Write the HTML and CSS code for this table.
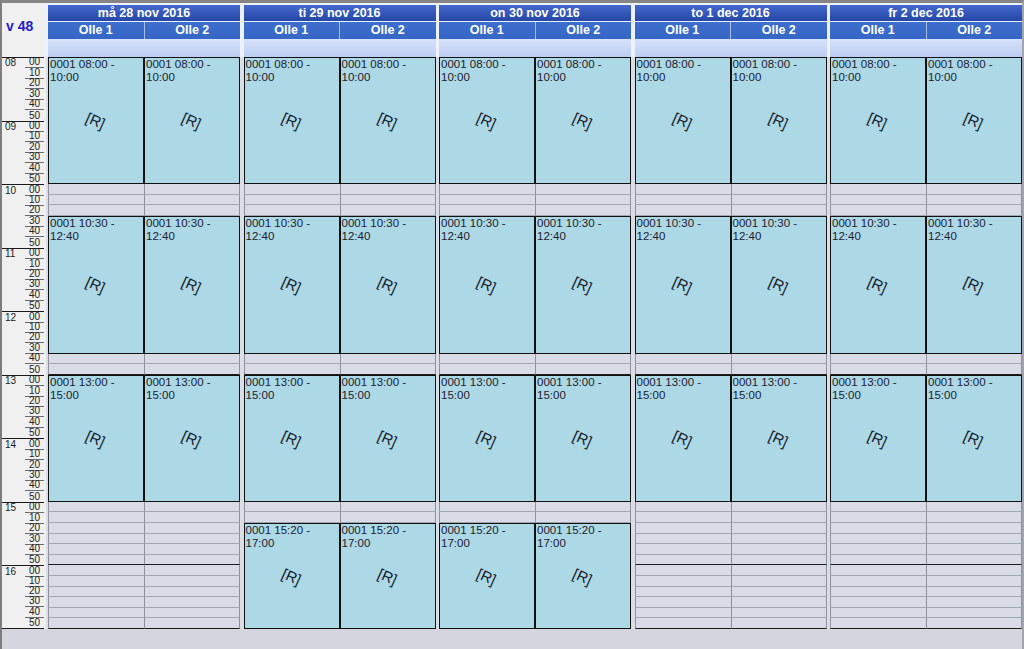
FILE: index.html
```html
<!DOCTYPE html>
<html lang="sv">
<head>
<meta charset="utf-8">
<title>Schema v 48</title>
<link rel="stylesheet" href="styles.css">
</head>
<body>
<div class="frame">
  <div class="timecol">
    <div class="week">v 48</div>
    <div class="tbody">
      <div class="hour"><div class="tr"><span class="h">08</span><span class="m">00</span></div><div class="tr"><span class="m">10</span></div><div class="tr"><span class="m">20</span></div><div class="tr"><span class="m">30</span></div><div class="tr"><span class="m">40</span></div><div class="tr"><span class="m">50</span></div></div>
      <div class="hour"><div class="tr"><span class="h">09</span><span class="m">00</span></div><div class="tr"><span class="m">10</span></div><div class="tr"><span class="m">20</span></div><div class="tr"><span class="m">30</span></div><div class="tr"><span class="m">40</span></div><div class="tr"><span class="m">50</span></div></div>
      <div class="hour"><div class="tr"><span class="h">10</span><span class="m">00</span></div><div class="tr"><span class="m">10</span></div><div class="tr"><span class="m">20</span></div><div class="tr"><span class="m">30</span></div><div class="tr"><span class="m">40</span></div><div class="tr"><span class="m">50</span></div></div>
      <div class="hour"><div class="tr"><span class="h">11</span><span class="m">00</span></div><div class="tr"><span class="m">10</span></div><div class="tr"><span class="m">20</span></div><div class="tr"><span class="m">30</span></div><div class="tr"><span class="m">40</span></div><div class="tr"><span class="m">50</span></div></div>
      <div class="hour"><div class="tr"><span class="h">12</span><span class="m">00</span></div><div class="tr"><span class="m">10</span></div><div class="tr"><span class="m">20</span></div><div class="tr"><span class="m">30</span></div><div class="tr"><span class="m">40</span></div><div class="tr"><span class="m">50</span></div></div>
      <div class="hour"><div class="tr"><span class="h">13</span><span class="m">00</span></div><div class="tr"><span class="m">10</span></div><div class="tr"><span class="m">20</span></div><div class="tr"><span class="m">30</span></div><div class="tr"><span class="m">40</span></div><div class="tr"><span class="m">50</span></div></div>
      <div class="hour"><div class="tr"><span class="h">14</span><span class="m">00</span></div><div class="tr"><span class="m">10</span></div><div class="tr"><span class="m">20</span></div><div class="tr"><span class="m">30</span></div><div class="tr"><span class="m">40</span></div><div class="tr"><span class="m">50</span></div></div>
      <div class="hour"><div class="tr"><span class="h">15</span><span class="m">00</span></div><div class="tr"><span class="m">10</span></div><div class="tr"><span class="m">20</span></div><div class="tr"><span class="m">30</span></div><div class="tr"><span class="m">40</span></div><div class="tr"><span class="m">50</span></div></div>
      <div class="hour"><div class="tr"><span class="h">16</span><span class="m">00</span></div><div class="tr"><span class="m">10</span></div><div class="tr"><span class="m">20</span></div><div class="tr"><span class="m">30</span></div><div class="tr"><span class="m">40</span></div><div class="tr"><span class="m">50</span></div></div>
    </div>
  </div>

  <!-- Day 1 -->
  <div class="day">
    <div class="dh">må 28 nov 2016</div>
    <div class="ol"><span>Olle 1</span><span>Olle 2</span></div>
    <div class="lt"></div>
    <div class="dbody">
      <div class="res">
        <div class="ev e1"><span class="t">0001 08:00 -<br>10:00</span><span class="r">[R]</span></div>
        <div class="ev e2"><span class="t">0001 10:30 -<br>12:40</span><span class="r">[R]</span></div>
        <div class="ev e3"><span class="t">0001 13:00 -<br>15:00</span><span class="r">[R]</span></div>
        <i class="c"></i><i class="c"></i><i class="c"></i><i class="c"></i><i class="c hr"></i>
        <i class="c"></i><i class="c"></i><i class="c"></i><i class="c"></i><i class="c"></i><i class="c hr"></i>
        <i class="c"></i><i class="c"></i><i class="c"></i><i class="c"></i><i class="c"></i><i class="c hr"></i>
      </div>
      <div class="res">
        <div class="ev e1"><span class="t">0001 08:00 -<br>10:00</span><span class="r">[R]</span></div>
        <div class="ev e2"><span class="t">0001 10:30 -<br>12:40</span><span class="r">[R]</span></div>
        <div class="ev e3"><span class="t">0001 13:00 -<br>15:00</span><span class="r">[R]</span></div>
        <i class="c"></i><i class="c"></i><i class="c"></i><i class="c"></i><i class="c hr"></i>
        <i class="c"></i><i class="c"></i><i class="c"></i><i class="c"></i><i class="c"></i><i class="c hr"></i>
        <i class="c"></i><i class="c"></i><i class="c"></i><i class="c"></i><i class="c"></i><i class="c hr"></i>
      </div>
    </div>
  </div>

  <!-- Day 2 -->
  <div class="day">
    <div class="dh">ti 29 nov 2016</div>
    <div class="ol"><span>Olle 1</span><span>Olle 2</span></div>
    <div class="lt"></div>
    <div class="dbody">
      <div class="res">
        <div class="ev e1"><span class="t">0001 08:00 -<br>10:00</span><span class="r">[R]</span></div>
        <div class="ev e2"><span class="t">0001 10:30 -<br>12:40</span><span class="r">[R]</span></div>
        <div class="ev e3"><span class="t">0001 13:00 -<br>15:00</span><span class="r">[R]</span></div>
        <div class="ev e4"><span class="t">0001 15:20 -<br>17:00</span><span class="r">[R]</span></div>
        <i class="c"></i><i class="c"></i><i class="c"></i><i class="c"></i><i class="c hr"></i>
        <i class="c"></i><i class="c"></i>
      </div>
      <div class="res">
        <div class="ev e1"><span class="t">0001 08:00 -<br>10:00</span><span class="r">[R]</span></div>
        <div class="ev e2"><span class="t">0001 10:30 -<br>12:40</span><span class="r">[R]</span></div>
        <div class="ev e3"><span class="t">0001 13:00 -<br>15:00</span><span class="r">[R]</span></div>
        <div class="ev e4"><span class="t">0001 15:20 -<br>17:00</span><span class="r">[R]</span></div>
        <i class="c"></i><i class="c"></i><i class="c"></i><i class="c"></i><i class="c hr"></i>
        <i class="c"></i><i class="c"></i>
      </div>
    </div>
  </div>

  <!-- Day 3 -->
  <div class="day">
    <div class="dh">on 30 nov 2016</div>
    <div class="ol"><span>Olle 1</span><span>Olle 2</span></div>
    <div class="lt"></div>
    <div class="dbody">
      <div class="res">
        <div class="ev e1"><span class="t">0001 08:00 -<br>10:00</span><span class="r">[R]</span></div>
        <div class="ev e2"><span class="t">0001 10:30 -<br>12:40</span><span class="r">[R]</span></div>
        <div class="ev e3"><span class="t">0001 13:00 -<br>15:00</span><span class="r">[R]</span></div>
        <div class="ev e4"><span class="t">0001 15:20 -<br>17:00</span><span class="r">[R]</span></div>
        <i class="c"></i><i class="c"></i><i class="c"></i><i class="c"></i><i class="c hr"></i>
        <i class="c"></i><i class="c"></i>
      </div>
      <div class="res">
        <div class="ev e1"><span class="t">0001 08:00 -<br>10:00</span><span class="r">[R]</span></div>
        <div class="ev e2"><span class="t">0001 10:30 -<br>12:40</span><span class="r">[R]</span></div>
        <div class="ev e3"><span class="t">0001 13:00 -<br>15:00</span><span class="r">[R]</span></div>
        <div class="ev e4"><span class="t">0001 15:20 -<br>17:00</span><span class="r">[R]</span></div>
        <i class="c"></i><i class="c"></i><i class="c"></i><i class="c"></i><i class="c hr"></i>
        <i class="c"></i><i class="c"></i>
      </div>
    </div>
  </div>

  <!-- Day 4 -->
  <div class="day">
    <div class="dh">to 1 dec 2016</div>
    <div class="ol"><span>Olle 1</span><span>Olle 2</span></div>
    <div class="lt"></div>
    <div class="dbody">
      <div class="res">
        <div class="ev e1"><span class="t">0001 08:00 -<br>10:00</span><span class="r">[R]</span></div>
        <div class="ev e2"><span class="t">0001 10:30 -<br>12:40</span><span class="r">[R]</span></div>
        <div class="ev e3"><span class="t">0001 13:00 -<br>15:00</span><span class="r">[R]</span></div>
        <i class="c"></i><i class="c"></i><i class="c"></i><i class="c"></i><i class="c hr"></i>
        <i class="c"></i><i class="c"></i><i class="c"></i><i class="c"></i><i class="c"></i><i class="c hr"></i>
        <i class="c"></i><i class="c"></i><i class="c"></i><i class="c"></i><i class="c"></i><i class="c hr"></i>
      </div>
      <div class="res">
        <div class="ev e1"><span class="t">0001 08:00 -<br>10:00</span><span class="r">[R]</span></div>
        <div class="ev e2"><span class="t">0001 10:30 -<br>12:40</span><span class="r">[R]</span></div>
        <div class="ev e3"><span class="t">0001 13:00 -<br>15:00</span><span class="r">[R]</span></div>
        <i class="c"></i><i class="c"></i><i class="c"></i><i class="c"></i><i class="c hr"></i>
        <i class="c"></i><i class="c"></i><i class="c"></i><i class="c"></i><i class="c"></i><i class="c hr"></i>
        <i class="c"></i><i class="c"></i><i class="c"></i><i class="c"></i><i class="c"></i><i class="c hr"></i>
      </div>
    </div>
  </div>

  <!-- Day 5 -->
  <div class="day">
    <div class="dh">fr 2 dec 2016</div>
    <div class="ol"><span>Olle 1</span><span>Olle 2</span></div>
    <div class="lt"></div>
    <div class="dbody">
      <div class="res">
        <div class="ev e1"><span class="t">0001 08:00 -<br>10:00</span><span class="r">[R]</span></div>
        <div class="ev e2"><span class="t">0001 10:30 -<br>12:40</span><span class="r">[R]</span></div>
        <div class="ev e3"><span class="t">0001 13:00 -<br>15:00</span><span class="r">[R]</span></div>
        <i class="c"></i><i class="c"></i><i class="c"></i><i class="c"></i><i class="c hr"></i>
        <i class="c"></i><i class="c"></i><i class="c"></i><i class="c"></i><i class="c"></i><i class="c hr"></i>
        <i class="c"></i><i class="c"></i><i class="c"></i><i class="c"></i><i class="c"></i><i class="c hr"></i>
      </div>
      <div class="res">
        <div class="ev e1"><span class="t">0001 08:00 -<br>10:00</span><span class="r">[R]</span></div>
        <div class="ev e2"><span class="t">0001 10:30 -<br>12:40</span><span class="r">[R]</span></div>
        <div class="ev e3"><span class="t">0001 13:00 -<br>15:00</span><span class="r">[R]</span></div>
        <i class="c"></i><i class="c"></i><i class="c"></i><i class="c"></i><i class="c hr"></i>
        <i class="c"></i><i class="c"></i><i class="c"></i><i class="c"></i><i class="c"></i><i class="c hr"></i>
        <i class="c"></i><i class="c"></i><i class="c"></i><i class="c"></i><i class="c"></i><i class="c hr"></i>
      </div>
    </div>
  </div>
</div>
</body>
</html>
```

FILE: styles.css
```css
* { box-sizing: border-box; margin: 0; padding: 0; }
html, body { width: 1024px; height: 649px; overflow: hidden; }
body {
  background: #d5d5df;
  font-family: "Liberation Sans", Arial, sans-serif;
}

.frame {
  display: flex;
  align-items: flex-start;
  gap: 2px;
  height: 649px;
  border-top: 3px solid #858585;
  border-left: 2px solid #7d7d7d;
  border-right: 2px solid #a4a4ae;
  background: linear-gradient(#eef1fa 0, #eef1fa 54px, #dcdee6 54px, #dcdee6 626px, #d5d5df 626px);
}

/* time column */
.timecol {
  width: 44px;
  flex: none;
  background: #f0f0f0;
}
.week {
  height: 54px;
  padding: 15px 0 0 4px;
  font-size: 14px;
  line-height: 16px;
  font-weight: bold;
  color: #1e22c8;
}
.tbody {
  height: 572px;
  display: grid;
  grid-template-rows: repeat(9, minmax(0, 1fr));
}
.hour {
  display: grid;
  grid-template-rows: repeat(6, minmax(0, 1fr));
  border-top: 1px solid #1a1a1a;
  margin-right: 2px;
}
.hour:last-child { border-bottom: 1px solid #1a1a1a; }
.tr {
  display: flex;
  align-items: flex-end;
  font-size: 10px;
  line-height: 10px;
  color: #202020;
  min-height: 0;
}
.tr .h { padding-left: 3px; }
.tr .m {
  margin-left: auto;
  width: 19px;
  text-align: right;
  padding-right: 4px;
  border-bottom: 1px solid #6a6a6a;
}
.tr:last-child .m { border-bottom: 0; }

/* days */
.day {
  width: 192px;
  flex: none;
  margin-left: 1.5px;
}
.day:nth-child(2) { margin-left: 0; }
.dh {
  margin-top: 2px;
  height: 16px;
  line-height: 16px;
  background: linear-gradient(#4468cc, #2447a7);
  color: #fff;
  font-weight: bold;
  font-size: 12.5px;
  text-align: center;
  margin-bottom: 1px;
}
.ol {
  display: flex;
  height: 17px;
  background: linear-gradient(#3d6fce, #3566c5);
}
.ol span {
  flex: 1;
  text-align: center;
  color: #fff;
  font-weight: bold;
  font-size: 12.5px;
  line-height: 17px;
}
.ol span + span { border-left: 1px solid #a9bdea; }
.lt {
  height: 18px;
  background: linear-gradient(#d6e2fb, #bccdf2);
}

.dbody {
  display: flex;
  height: 572px;
}
.res {
  width: 96px;
  display: grid;
  grid-template-rows: repeat(54, minmax(0, 1fr));
}

.c {
  display: block;
  background: #d9dce6;
  border-left: 1px solid #8d919d;
  border-bottom: 1px solid #a0a5b2;
  min-height: 0;
}
.res + .res .c { border-right: 1px solid #8d919d; }
.c.hr { border-bottom-color: #1c1c1c; }

.ev {
  display: grid;
  background: #add8e6;
  border: 1px solid #111;
  color: #1c2030;
  font-size: 11.5px;
  line-height: 13px;
  min-height: 0;
}
.e1 { grid-row: 1 / 13; }
.e2 { grid-row: 16 / 29; }
.e3 { grid-row: 31 / 43; }
.e4 { grid-row: 45 / 55; }
.ev .t {
  grid-area: 1 / 1;
  align-self: start;
  padding-left: 1px;
  white-space: nowrap;
}
.ev .r {
  grid-area: 1 / 1;
  place-self: center;
  font-size: 15px;
  line-height: 15px;
  transform: rotate(24deg);
  color: #18222e;
}
```
